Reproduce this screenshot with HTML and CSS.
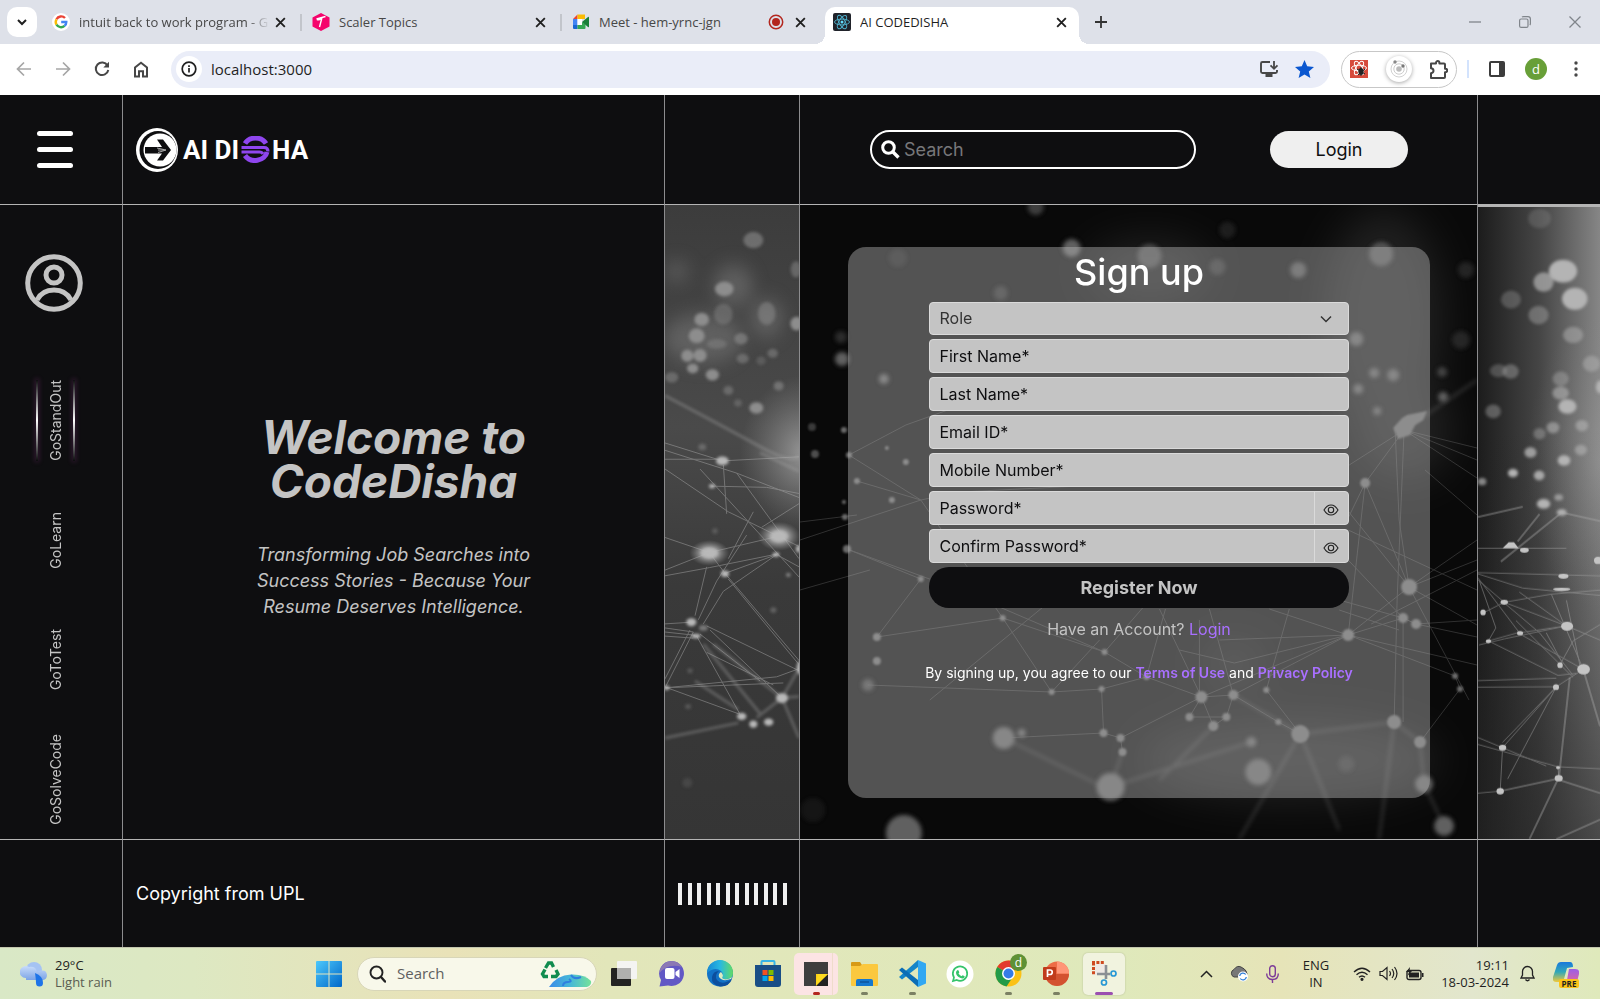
FILE: index.html
```html
<!DOCTYPE html>
<html lang="en">
<head>
<meta charset="utf-8">
<meta name="viewport" content="width=device-width, initial-scale=1">
<title>AI CODEDISHA</title>
<link rel="stylesheet" href="styles.css">
</head>
<body>
<svg class="defs" aria-hidden="true">
  <defs>
    <symbol id="x" viewBox="0 0 12 12"><path d="M2 2l8 8M10 2l-8 8" stroke="currentColor" stroke-width="1.7" fill="none"/></symbol>
    <symbol id="eye" viewBox="0 0 16 12"><path d="M1 6C3 2.600 5.300 1 8 1s5 1.600 7 5c-2 3.400-4.300 5-7 5S3 9.400 1 6z" fill="none" stroke="#222" stroke-width="1.100"/><circle cx="8" cy="6" r="2.700" fill="none" stroke="#222" stroke-width="1.100"/></symbol>
  </defs>
</svg>

<div class="tabstrip">
  <button class="tab-menu" aria-label="Search tabs"><svg width="12" height="12" viewBox="0 0 12 12"><path d="M2 4l4 4 4-4" fill="none" stroke="#1f1f1f" stroke-width="2"/></svg></button>
  <div class="tab">
    <svg width="18" height="18" viewBox="0 0 18 18"><circle cx="9" cy="9" r="9" fill="#fff"/><g fill="none" stroke-width="2.400"><path d="M13 5A5.300 5.300 0 0 0 4.500 6.300" stroke="#ea4335"/><path d="M4.500 6.300a5.300 5.300 0 0 0 0 5.400" stroke="#fbbc05"/><path d="M4.500 11.700a5.300 5.300 0 0 0 8 1.200" stroke="#34a853"/><path d="M12.500 12.900A5 5 0 0 0 14.300 9H9.200" stroke="#4285f4"/></g></svg>
    <span class="tab-title fade">intuit back to work program - G</span>
    <button class="tab-close" aria-label="Close tab"><svg width="13" height="13"><use href="#x"/></svg></button>
  </div>
  <div class="tab">
    <svg width="18" height="18" viewBox="0 0 18 18"><path d="M9 0l8.500 4.500v9L9 18 .5 13.500v-9z" fill="#f5046c"/><path d="M4.500 6l9-2.500M10 4.500L7.500 14M5 6.500q2 1 4-1" stroke="#fff" stroke-width="1.400" fill="none"/></svg>
    <span class="tab-title">Scaler Topics</span>
    <button class="tab-close" aria-label="Close tab"><svg width="13" height="13"><use href="#x"/></svg></button>
  </div>
  <div class="tab last">
    <svg width="18" height="18" viewBox="0 0 18 18"><path d="M1 6l4.500-4.500V6z" fill="#ea4335"/><path d="M5.500 1.500H13V6H5.500z" fill="#fbbc04"/><path d="M1 6h4.500v6H1z" fill="#4285f4"/><path d="M1 12h4.500v4H2q-1 0-1-1z" fill="#1967d2"/><path d="M5.500 12H10V9l3.500 2.500V15q0 1-1 1h-7z" fill="#34a853"/><path d="M5.500 6H10v6H5.500z" fill="#fff"/><path d="M10 9l6-5q1-.6 1 .5v9q0 1-1 .4z" fill="#188038"/></svg>
    <span class="tab-title">Meet - hem-yrnc-jgn</span>
    <svg width="16" height="16" viewBox="0 0 16 16"><circle cx="8" cy="8" r="6.700" fill="none" stroke="#b3261e" stroke-width="1.500"/><circle cx="8" cy="8" r="4" fill="#b3261e"/></svg>
    <button class="tab-close" aria-label="Close tab"><svg width="13" height="13"><use href="#x"/></svg></button>
  </div>
  <div class="tab active">
    <svg width="18" height="18" viewBox="0 0 18 18"><rect width="18" height="18" rx="2" fill="#20232a"/><g fill="none" stroke="#4fb3cf" stroke-width=".9"><ellipse cx="9" cy="9" rx="7.500" ry="2.900"/><ellipse cx="9" cy="9" rx="7.500" ry="2.900" transform="rotate(60 9 9)"/><ellipse cx="9" cy="9" rx="7.500" ry="2.900" transform="rotate(120 9 9)"/></g><circle cx="9" cy="9" r="1.500" fill="#61dafb"/></svg>
    <span class="tab-title">AI CODEDISHA</span>
    <button class="tab-close" aria-label="Close tab"><svg width="13" height="13"><use href="#x"/></svg></button>
  </div>
  <button class="new-tab" aria-label="New tab"><svg width="14" height="14" viewBox="0 0 14 14"><path d="M7 1v12M1 7h12" stroke="#333" stroke-width="1.800"/></svg></button>
  <div class="win-controls">
    <button aria-label="Minimize"><svg width="12" height="12" viewBox="0 0 12 12"><path d="M0 6h12" stroke="#80858b" stroke-width="1.300"/></svg></button>
    <button aria-label="Restore"><svg width="12" height="12" viewBox="0 0 12 12" fill="none" stroke="#80858b" stroke-width="1.200"><rect x=".6" y="3" width="8.400" height="8.400" rx="1.500"/><path d="M3 1q.5-.4 1.500-.4h4.500q2.400 0 2.400 2.400v4.500q0 1-.6 1.500"/></svg></button>
    <button aria-label="Close"><svg width="12" height="12" viewBox="0 0 12 12"><path d="M.5.5l11 11M11.500.5l-11 11" stroke="#80858b" stroke-width="1.300"/></svg></button>
  </div>
</div>

<div class="toolbar">
  <div class="nav-buttons">
    <button aria-label="Back"><svg width="16" height="16" viewBox="0 0 16 16"><path d="M15 8H2M8 1.500L1.500 8 8 14.500" fill="none" stroke="#a6a6a6" stroke-width="1.700"/></svg></button>
    <button aria-label="Forward"><svg width="16" height="16" viewBox="0 0 16 16"><path d="M1 8h13M8 1.500L14.500 8 8 14.500" fill="none" stroke="#a6a6a6" stroke-width="1.700"/></svg></button>
    <button aria-label="Reload"><svg width="16" height="16" viewBox="0 0 16 16"><path d="M13.500 4.500A6.300 6.300 0 1 0 14.300 9" fill="none" stroke="#474747" stroke-width="2"/><path d="M15 .8v5.700H9.300z" fill="#474747"/></svg></button>
    <button aria-label="Home"><svg width="16" height="17" viewBox="0 0 16 17"><path d="M2 15.500V6.500L8 1.800l6 4.700v9h-4v-5.300H6v5.300z" fill="none" stroke="#474747" stroke-width="2"/></svg></button>
  </div>
  <div class="omnibox">
    <button class="site-info" aria-label="Site information"><svg width="16" height="16" viewBox="0 0 16 16"><circle cx="8" cy="8" r="6.800" fill="none" stroke="#1f1f1f" stroke-width="1.700"/><path d="M8 7v4.500M8 4.300v1.700" stroke="#1f1f1f" stroke-width="1.700"/></svg></button>
    <input class="url" type="text" value="localhost:3000" aria-label="Address">
    <button aria-label="Install app"><svg width="20" height="18" viewBox="0 0 20 18"><path d="M11 2H3.500Q2 2 2 3.500v8Q2 13 3.500 13h13q1.500 0 1.500-1.500V10" fill="none" stroke="#474747" stroke-width="1.900"/><path d="M6.500 14h7v3h-7z" fill="#474747"/><path d="M15 1v7M11.500 5.300L15 8.800l3.500-3.500" fill="none" stroke="#474747" stroke-width="1.800"/></svg></button>
    <button aria-label="Bookmark"><svg width="19" height="18" viewBox="0 0 19 18"><path d="M9.500 0l2.700 6.300 6.800.6-5.200 4.500 1.600 6.600-5.900-3.500L3.600 18l1.600-6.600L0 6.900l6.800-.6z" fill="#0b57d0"/></svg></button>
  </div>
  <div class="extensions">
    <button aria-label="React tools"><svg width="18" height="18" viewBox="0 0 18 18"><rect width="18" height="18" fill="#d64a3b"/><g fill="none" stroke="#fff" stroke-width="1"><ellipse cx="9" cy="8" rx="7.500" ry="2.800"/><ellipse cx="9" cy="8" rx="7.500" ry="2.800" transform="rotate(60 9 8)"/><ellipse cx="9" cy="8" rx="7.500" ry="2.800" transform="rotate(120 9 8)"/></g><ellipse cx="11" cy="11.500" rx="2.600" ry="3.500" fill="#222"/><path d="M7 9l8 5M15 9l-7 6M11 7v9" stroke="#222"/></svg></button>
    <button class="orbit" aria-label="Orbit"><svg width="26" height="26" viewBox="0 0 26 26"><circle cx="13" cy="13" r="2.800" fill="#bbb"/><circle cx="13" cy="13" r="5.200" fill="none" stroke="#ccc"/><circle cx="13" cy="13" r="8" fill="none" stroke="#d2d2d2"/><circle cx="9" cy="6" r="1.700" fill="#888"/><circle cx="17" cy="10" r="1.700" fill="#777"/></svg></button>
    <button aria-label="Extensions"><svg width="19" height="19" viewBox="0 0 19 19"><path d="M2 3.500h5V2.800a1.700 1.700 0 0 1 3.400 0v.7h4.600q1 0 1 1v4.300h.5a1.700 1.700 0 0 1 0 3.400H16V17q0 1-1 1H2v-4.800q2.500-.4 2.500-2.500T2 8.300z" fill="none" stroke="#474747" stroke-width="2" stroke-linejoin="round"/></svg></button>
  </div>
  <span class="divider"></span>
  <button aria-label="Side panel"><svg width="16" height="16" viewBox="0 0 16 16"><rect x="1" y="1" width="14" height="14" rx="1" fill="none" stroke="#3c3c3c" stroke-width="2"/><path d="M10 1h5v14h-5z" fill="#3c3c3c"/></svg></button>
  <button class="avatar" aria-label="Profile">d</button>
  <button aria-label="Menu"><svg width="4" height="16" viewBox="0 0 4 16" fill="#474747"><circle cx="2" cy="2" r="1.700"/><circle cx="2" cy="8" r="1.700"/><circle cx="2" cy="14" r="1.700"/></svg></button>
</div>

<div class="site">
  <header class="cell burger-cell"><button class="burger" aria-label="Menu"><span></span><span></span><span></span></button></header>
  <div class="cell logo-cell">
    <a class="logo" href="#" aria-label="AI Disha">
      <svg width="42" height="44" viewBox="0 0 42 44"><ellipse cx="21" cy="22" rx="21" ry="22" fill="#fff"/><ellipse cx="22" cy="22" rx="18.500" ry="19" fill="#0e0e10"/><ellipse cx="24" cy="22" rx="16.500" ry="16.500" fill="#fff"/><path d="M9 19h17l-5-7.500h6L35 22l-8 10.500h-6l5-7H9z" fill="#0e0e10"/><path d="M21 20l9 2-8 2.500M22 22h6" stroke="#bbb" fill="none" stroke-width=".9"/></svg>
      <span>AI DI</span>
      <svg class="logo-s" width="29" height="27" viewBox="0 0 29 27" fill="none" stroke="#8f46ee"><path d="M25 7.500A12 10.500 0 0 0 4 7.500" stroke-width="5"/><path d="M.5 11.500H23q4 0 4 4" stroke-width="3.200"/><path d="M.5 16h18q2.500 0 3.500 2" stroke-width="3"/><path d="M4 19.500A12 10.500 0 0 0 26 16" stroke-width="5"/></svg>
      <span>HA</span>
    </a>
  </div>
  <div class="cell"></div>
  <div class="cell tools-cell">
    <label class="search">
      <svg width="19" height="19" viewBox="0 0 19 19"><circle cx="7.500" cy="7.500" r="5.800" fill="none" stroke="#fff" stroke-width="3"/><path d="M12 12l5.500 5.500" stroke="#fff" stroke-width="3.400"/></svg>
      <input type="search" placeholder="Search" aria-label="Search">
    </label>
    <button class="login">Login</button>
  </div>
  <div class="cell end"></div>

  <nav class="cell side">
    <a class="profile" href="#" aria-label="Profile"><svg width="58" height="58" viewBox="0 0 58 58" fill="none" stroke="#c4c4c4" stroke-width="5"><circle cx="29" cy="29" r="26.300"/><circle cx="29" cy="21" r="8"/><path d="M12 46q5-10 17-10t17 10"/></svg></a>
    <div class="side-item"><a class="current" href="#">GoStandOut</a></div>
    <div class="side-item"><a href="#">GoLearn</a></div>
    <div class="side-item"><a href="#">GoToTest</a></div>
    <div class="side-item"><a href="#">GoSolveCode</a></div>
  </nav>
  <section class="cell welcome">
    <h1>Welcome to<br>CodeDisha</h1>
    <p>Transforming Job Searches into<br>Success Stories - Because Your<br>Resume Deserves Intelligence.</p>
  </section>
  <div class="cell art">
    <svg class="scene" viewBox="15 12 402 1556" preserveAspectRatio="none" aria-hidden="true">
      <defs>
        <linearGradient id="ga" x2="0" y2="1"><stop offset="0" stop-color="#3c3c3c"/><stop offset=".35" stop-color="#4a4a4a"/><stop offset=".6" stop-color="#3a3a3a"/><stop offset="1" stop-color="#353535"/></linearGradient>
        <radialGradient id="glow"><stop offset="0" stop-color="#aaa" stop-opacity=".8"/><stop offset="1" stop-color="#888" stop-opacity="0"/></radialGradient>
        <radialGradient id="node"><stop offset="0" stop-color="#d4d4d4"/><stop offset=".4" stop-color="#bbb" stop-opacity=".8"/><stop offset="1" stop-color="#888" stop-opacity="0"/></radialGradient>
        <filter id="b1" x="-50%" y="-50%" width="200%" height="200%"><feGaussianBlur stdDeviation="4"/></filter>
        <filter id="b2" x="-50%" y="-50%" width="200%" height="200%"><feGaussianBlur stdDeviation="24"/></filter>
      </defs>
      <rect x="15" y="12" width="402" height="1556" fill="url(#ga)"/>
      <ellipse cx="430" cy="620" rx="190" ry="190" fill="url(#glow)"/>
      <g fill="#777" filter="url(#b2)" opacity=".55"><ellipse cx="130" cy="340" rx="120" ry="60"/><ellipse cx="320" cy="290" rx="50" ry="45"/><ellipse cx="50" cy="175" rx="40" ry="20"/><ellipse cx="220" cy="210" rx="60" ry="50"/></g>
      <g fill="#8d8d8d" filter="url(#b1)">
        <ellipse cx="280" cy="98" rx="30" ry="20" opacity=".6"/><ellipse cx="193" cy="218" rx="28" ry="18"/><ellipse cx="125" cy="293" rx="22" ry="16"/><ellipse cx="110" cy="333" rx="24" ry="18"/><ellipse cx="82" cy="382" rx="18" ry="15"/><ellipse cx="120" cy="381" rx="20" ry="16"/><ellipse cx="98" cy="413" rx="17" ry="12"/><ellipse cx="157" cy="429" rx="20" ry="14"/><ellipse cx="190" cy="280" rx="28" ry="26" opacity=".4"/><ellipse cx="170" cy="353" rx="30" ry="12" opacity=".4"/><ellipse cx="320" cy="278" rx="26" ry="28" opacity=".5"/><ellipse cx="243" cy="340" rx="20" ry="14" opacity=".6"/><ellipse cx="248" cy="389" rx="18" ry="12" opacity=".5"/><ellipse cx="338" cy="376" rx="16" ry="11" opacity=".5"/><ellipse cx="303" cy="394" rx="14" ry="11" opacity=".3"/><ellipse cx="205" cy="467" rx="15" ry="11" opacity=".5"/><ellipse cx="356" cy="456" rx="15" ry="11" opacity=".6"/><ellipse cx="289" cy="510" rx="21" ry="14"/><ellipse cx="234" cy="498" rx="12" ry="9" opacity=".4"/><ellipse cx="410" cy="303" rx="19" ry="17"/><ellipse cx="408" cy="170" rx="16" ry="20" opacity=".5"/><ellipse cx="35" cy="435" rx="20" ry="13" opacity=".5"/><ellipse cx="127" cy="606" rx="12" ry="8" opacity=".5"/><ellipse cx="165" cy="812" rx="8" ry="7" opacity=".4"/><ellipse cx="340" cy="1006" rx="9" ry="7" opacity=".5"/><ellipse cx="385" cy="920" rx="7" ry="5"/><ellipse cx="90" cy="1155" rx="8" ry="6" opacity=".4"/><ellipse cx="84" cy="1243" rx="9" ry="6" opacity=".4"/><ellipse cx="82" cy="1430" rx="15" ry="12" opacity=".2"/>
      </g>
      <g class="thick" filter="url(#b1)" opacity=".35"><path d="M15 480Q200 560 300 605T417 628M300 620L417 665M160 1090L366 1222L417 1218M290 1270L366 1222L417 1150M366 1222L417 1320M105 1180L235 1250M130 1090L300 1260M15 1320L235 1283"/></g>
      <g class="thin">
        <path d="M15 596L187 640L417 630M15 636H187M15 614L230 670L417 730M15 660L205 765L355 825M120 660L417 925M190 650L200 770M230 670L417 880M155 702L320 705L417 720M305 803L417 745M15 828L148 865L15 908M15 922L148 902L355 868M148 865L355 825L417 850M148 865L195 916L417 1130M205 930L417 1140M195 916L350 870L417 900M350 870L190 960L130 1040M260 822L170 935L115 1030M140 900L105 1020M280 765L205 880M15 1040L95 1036M15 1050L100 1060M15 1060L105 1068M15 1070L100 1075M140 1045L417 1155M150 1055L366 1222M110 1070L240 1262M120 1065L300 1180M100 1060L15 1197M90 1055L15 1175M15 1197L350 1170L417 1150M15 1197L370 1185M15 1195L240 1262M140 1110L340 1190"/>
      </g>
      <g fill="url(#node)"><ellipse cx="148" cy="866" rx="60" ry="32"/><ellipse cx="357" cy="825" rx="64" ry="36"/></g>
      <g fill="#b9b9b9" filter="url(#b1)"><ellipse cx="187" cy="640" rx="19" ry="11"/><ellipse cx="148" cy="866" rx="24" ry="10"/><ellipse cx="357" cy="825" rx="24" ry="11"/><ellipse cx="195" cy="917" rx="12" ry="8"/><ellipse cx="348" cy="870" rx="10" ry="6"/><ellipse cx="94" cy="1036" rx="15" ry="10"/><ellipse cx="108" cy="1070" rx="14" ry="6"/><ellipse cx="130" cy="1050" rx="13" ry="7" opacity=".5"/><ellipse cx="366" cy="1222" rx="18" ry="12"/><ellipse cx="245" cy="1267" rx="14" ry="9"/><ellipse cx="280" cy="1286" rx="12" ry="9"/><ellipse cx="326" cy="1281" rx="14" ry="9"/><ellipse cx="156" cy="702" rx="9" ry="5"/><ellipse cx="415" cy="856" rx="7" ry="9"/><ellipse cx="420" cy="1148" rx="10" ry="16"/><ellipse cx="20" cy="1197" rx="8" ry="6"/></g>
    </svg>
  </div>
  <main class="cell form-cell">
    <svg class="scene" viewBox="800 205 678 634" preserveAspectRatio="none" aria-hidden="true">
      <defs>
        <filter id="c1" x="-50%" y="-50%" width="200%" height="200%"><feGaussianBlur stdDeviation="1"/></filter>
        <filter id="c3" x="-50%" y="-50%" width="200%" height="200%"><feGaussianBlur stdDeviation="2"/></filter>
        <filter id="c2" x="-50%" y="-50%" width="200%" height="200%"><feGaussianBlur stdDeviation="22"/></filter>
      </defs>
      <rect x="800" y="205" width="678" height="634" fill="#090909"/>
      <g fill="#777" filter="url(#c2)" opacity=".22"><ellipse cx="1385" cy="320" rx="60" ry="110"/><ellipse cx="1150" cy="270" rx="60" ry="30"/><ellipse cx="1405" cy="430" rx="50" ry="50"/><ellipse cx="1290" cy="760" rx="150" ry="40"/><ellipse cx="1235" cy="663" rx="30" ry="20"/></g>
      <g class="thick" opacity=".2" filter="url(#c3)"><path d="M1301 734L1395 722L1421 742L1425 784L1445 826M1301 734L1234 695M1111 787L1252 742M1123 752L1111 787M1301 734L1340 830M1301 734L1240 839M1395 722L1380 839M1214 726L1160 780M1405 430L1478 380M1004 738L1110 790"/></g>
      <g class="faint">
        <path d="M849 455L921 500L1003 618M849 455L906 425L990 395M857 481L921 500L960 492L1080 486M800 540L921 500M847 549L921 579L877 637M847 549L960 590L1105 652L1147 677L1202 697L1234 695M877 637L1003 618L1105 652M1003 618L1052 692L1102 689L1147 677M868 685L1052 692M1102 689L1104 733L1121 738L1202 697M1004 738L1104 733M1052 692L1100 640M1121 738L1123 752M1202 697L1190 717M1202 697L1214 726L1227 717L1234 695L1279 722L1301 734M1267 690L1301 734M1190 717L1227 717M1105 652L1150 600M1147 677L1166 609M1202 697L1160 609M1202 697L1349 635M1234 695L1349 635M1267 690L1290 609M1349 635L1410 587L1478 540M1349 635L1404 618L1417 624L1478 637M1349 635L1456 676L1461 689L1421 742M1349 635L1478 665M1349 635L1366 483M1366 483L1405 430L1478 478M1366 483L1348 520M1405 430L1398 600M1398 600L1395 722M1404 620L1404 722M1405 430L1350 465M1405 430L1478 460M1405 430L1478 448M1366 483L1410 587M1396 430L1400 520L1410 587L1470 700M1340 500L1410 587M1330 540L1404 618M1372 624L1478 570M1340 600L1404 618M1340 610L1400 630M1410 587L1478 560M1417 624L1478 620M1410 587L1478 625M1426 470L1478 515M1349 530L1478 590M930 700L1052 600M800 590L870 570M800 522L857 515M1200 697L1200 620M1234 695L1210 609M1349 635L1270 609M1349 635L1235 663L1180 650M1349 635L1220 640"/>
      </g>
      <g fill="#606060" filter="url(#c3)">
        <circle cx="1036" cy="207" r="8" opacity=".6"/><circle cx="1072" cy="248" r="9"/><circle cx="1150" cy="256" r="12" opacity=".7"/><circle cx="1218" cy="267" r="8" opacity=".4"/><circle cx="1299" cy="270" r="8" opacity=".8"/><circle cx="1382" cy="254" r="12" opacity=".8"/><circle cx="1228" cy="230" r="8" opacity=".25"/><circle cx="898" cy="258" r="9" opacity=".2"/><circle cx="1001" cy="293" r="7" opacity=".4"/><circle cx="842" cy="359" r="7"/><circle cx="884" cy="379" r="5"/><circle cx="841" cy="337" r="6" opacity=".4"/><circle cx="1357" cy="339" r="7"/><circle cx="1394" cy="375" r="6"/><circle cx="1375" cy="373" r="5"/><circle cx="1359" cy="389" r="5"/><circle cx="1378" cy="411" r="4"/><circle cx="1444" cy="397" r="5"/><circle cx="1443" cy="372" r="5" opacity=".6"/><circle cx="1467" cy="270" r="8" opacity=".3"/><circle cx="1462" cy="340" r="9" opacity=".3"/><circle cx="868" cy="685" r="6" opacity=".7"/><circle cx="1022" cy="733" r="4"/><circle cx="1252" cy="742" r="5"/><circle cx="1004" cy="738" r="11"/><circle cx="1111" cy="787" r="14"/><circle cx="1259" cy="772" r="13"/><circle cx="904" cy="833" r="18"/><circle cx="1445" cy="826" r="10"/><circle cx="1425" cy="784" r="9"/><circle cx="813" cy="810" r="12" opacity=".15"/><circle cx="1347" cy="764" r="8" opacity=".3"/>
      </g>
      <g fill="#6b6b6b" filter="url(#c1)">
        <circle cx="849" cy="455" r="3"/><circle cx="844" cy="430" r="3"/><circle cx="887" cy="448" r="2"/><circle cx="857" cy="481" r="3"/><circle cx="906" cy="462" r="3"/><circle cx="892" cy="500" r="3"/><circle cx="844" cy="502" r="2"/><circle cx="815" cy="454" r="4" opacity=".7"/><circle cx="812" cy="427" r="4" opacity=".5"/><circle cx="877" cy="661" r="4"/><circle cx="1123" cy="752" r="4"/>
        <path d="M1394 428l9-10 5-3 20-4-4 9-8 5-5 10-12 4z"/><circle cx="1366" cy="483" r="5"/><circle cx="847" cy="549" r="4"/><circle cx="921" cy="579" r="3"/><circle cx="845" cy="517" r="3"/><circle cx="877" cy="637" r="4"/><circle cx="1003" cy="618" r="3"/><circle cx="1105" cy="652" r="3"/><circle cx="1104" cy="733" r="4"/><circle cx="1121" cy="738" r="4"/><circle cx="1052" cy="692" r="3"/><circle cx="1102" cy="689" r="3"/><circle cx="1147" cy="677" r="3"/><circle cx="1202" cy="697" r="6"/><circle cx="1234" cy="695" r="5"/><circle cx="1267" cy="690" r="3"/><circle cx="1190" cy="717" r="4"/><circle cx="1227" cy="717" r="4"/><circle cx="1214" cy="726" r="5"/><circle cx="1279" cy="722" r="3"/><circle cx="1301" cy="734" r="9"/><circle cx="1395" cy="722" r="7"/><circle cx="1421" cy="742" r="6"/><circle cx="1349" cy="635" r="6"/><circle cx="1410" cy="587" r="8"/><circle cx="1404" cy="618" r="5"/><circle cx="1417" cy="624" r="5"/><circle cx="1456" cy="676" r="3"/><circle cx="1461" cy="689" r="3"/>
      </g>
    </svg>
    <form class="card">
      <h2>Sign up</h2>
      <select class="field" aria-label="Role"><option>Role</option><option>Student</option><option>Recruiter</option></select>
      <input class="field" type="text" placeholder="First Name*" aria-label="First Name">
      <input class="field" type="text" placeholder="Last Name*" aria-label="Last Name">
      <input class="field" type="email" placeholder="Email ID*" aria-label="Email ID">
      <input class="field" type="tel" placeholder="Mobile Number*" aria-label="Mobile Number">
      <div class="field secret"><input type="password" placeholder="Password*" aria-label="Password"><button type="button" aria-label="Show password"><svg width="16" height="12"><use href="#eye"/></svg></button></div>
      <div class="field secret"><input type="password" placeholder="Confirm Password*" aria-label="Confirm Password"><button type="button" aria-label="Show password"><svg width="16" height="12"><use href="#eye"/></svg></button></div>
      <button class="register" type="button">Register Now</button>
      <p class="have">Have an Account? <a href="#">Login</a></p>
      <p class="terms">By signing up, you agree to our <a href="#">Terms of Use</a> and <a href="#">Privacy Policy</a></p>
    </form>
  </main>
  <div class="cell art end edge">
    <svg class="scene" viewBox="117 12 363 1556" preserveAspectRatio="none" aria-hidden="true">
      <defs>
        <linearGradient id="gb"><stop offset="0" stop-color="#1c1c1c"/><stop offset=".5" stop-color="#454545"/><stop offset="1" stop-color="#868686"/></linearGradient>
        <linearGradient id="gc" x2="0" y2="1"><stop offset=".35" stop-color="#222" stop-opacity="0"/><stop offset="1" stop-color="#222" stop-opacity=".6"/></linearGradient>
      </defs>
      <rect x="117" y="12" width="363" height="1556" fill="url(#gb)"/>
      <rect x="117" y="12" width="363" height="1556" fill="url(#gc)"/>
      <ellipse cx="480" cy="640" rx="220" ry="360" fill="url(#glow)" opacity=".4"/>
      <g fill="#b4b4b4" filter="url(#b1)">
        <ellipse cx="370" cy="170" rx="42" ry="28"/><ellipse cx="312" cy="197" rx="30" ry="24" opacity=".7"/><ellipse cx="405" cy="238" rx="38" ry="27"/><ellipse cx="300" cy="40" rx="34" ry="24" opacity=".2"/><ellipse cx="215" cy="240" rx="30" ry="22" opacity=".3"/><ellipse cx="297" cy="278" rx="30" ry="23" opacity=".4"/><ellipse cx="400" cy="327" rx="30" ry="20" opacity=".5"/><ellipse cx="455" cy="398" rx="26" ry="20" opacity=".5"/><ellipse cx="178" cy="415" rx="26" ry="16" opacity=".3"/><ellipse cx="214" cy="417" rx="24" ry="18" opacity=".4"/><ellipse cx="363" cy="435" rx="24" ry="18" opacity=".4"/><ellipse cx="363" cy="470" rx="25" ry="16" opacity=".6"/><ellipse cx="383" cy="503" rx="27" ry="18"/><ellipse cx="162" cy="515" rx="23" ry="17" opacity=".4"/><ellipse cx="340" cy="555" rx="19" ry="14" opacity=".6"/><ellipse cx="300" cy="570" rx="18" ry="14" opacity=".4"/><ellipse cx="426" cy="550" rx="19" ry="14" opacity=".6"/><ellipse cx="273" cy="616" rx="18" ry="13" opacity=".8"/><ellipse cx="423" cy="610" rx="18" ry="13" opacity=".6"/><ellipse cx="373" cy="636" rx="19" ry="13"/><ellipse cx="221" cy="667" rx="15" ry="10"/><ellipse cx="299" cy="673" rx="16" ry="12" opacity=".9"/><ellipse cx="129" cy="688" rx="13" ry="9" opacity=".7"/><ellipse cx="357" cy="727" rx="13" ry="8" opacity=".7"/><ellipse cx="312" cy="743" rx="20" ry="12"/><ellipse cx="366" cy="764" rx="15" ry="8"/><ellipse cx="480" cy="455" rx="12" ry="16"/>
      </g>
      <g class="thick soft" opacity=".4"><path d="M117 775L250 750M300 768L235 835M366 764L185 885M366 764L480 785M430 1150L480 1290M390 1170L358 1415L270 1568M183 1450L350 1420L480 1455M350 1568L480 1520"/></g>
      <g class="thin">
        <path d="M117 852H380M117 912L480 920M117 915L250 950L480 968M117 930L195 985L335 965L480 955M135 1010L195 985L380 1043M117 925L240 1060L380 1043M148 1080L235 1060L430 1150M148 1080L355 1165L410 1160M120 930L170 1048L148 1080M200 990L300 1060L400 1165M240 960L380 1043L480 1078M335 965L430 1150M380 980L420 1140M117 1178L350 1172M117 1194L350 1193M430 1150L350 1193L190 1343L183 1450M350 1193L205 1420M350 1193L190 1330M117 1318L190 1343L320 1388M117 1335L355 1390L480 1395M355 1390L357 1418M117 1455L183 1450M480 1040L400 1080L360 1140M120 1090L195 1075L380 1043M320 1060L365 1130M230 1030L400 1170"/>
      </g>
      <g fill="#c4c4c4"><path d="M190 852l18-15h16l14 15z"/><ellipse cx="255" cy="857" rx="13" ry="6"/><ellipse cx="382" cy="1044" rx="18" ry="11"/><ellipse cx="431" cy="1150" rx="19" ry="13"/><ellipse cx="371" cy="921" rx="15" ry="6"/><ellipse cx="366" cy="953" rx="26" ry="4"/><ellipse cx="195" cy="985" rx="11" ry="6"/><ellipse cx="132" cy="1010" rx="8" ry="7"/><ellipse cx="148" cy="1081" rx="8" ry="5"/><ellipse cx="242" cy="1061" rx="9" ry="5"/><ellipse cx="361" cy="1140" rx="8" ry="7"/><ellipse cx="349" cy="1194" rx="9" ry="7"/><ellipse cx="190" cy="1343" rx="11" ry="7"/><ellipse cx="183" cy="1450" rx="11" ry="8"/><ellipse cx="357" cy="1418" rx="12" ry="8"/><ellipse cx="355" cy="1392" rx="6" ry="4"/><ellipse cx="474" cy="882" rx="12" ry="9"/></g>
    </svg>
  </div>

  <div class="cell foot"></div>
  <footer class="cell foot copyright">Copyright from UPL</footer>
  <div class="cell foot bars"><i></i><i></i><i></i><i></i><i></i><i></i><i></i><i></i><i></i><i></i><i></i><i></i></div>
  <div class="cell foot"></div>
  <div class="cell foot end"></div>
</div>

<div class="taskbar">
  <button class="weather">
    <svg width="28" height="26" viewBox="0 0 28 26"><defs><linearGradient id="cl" x2="0" y2="1"><stop offset="0" stop-color="#c8dcfa"/><stop offset="1" stop-color="#7ba3e6"/></linearGradient></defs><circle cx="14" cy="9" r="8" fill="#a5c3f3"/><path d="M6 17a6 6 0 1 1 3-11q7-1 8 5 9-4 10 3 0 5-5 5H6z" fill="url(#cl)"/><path d="M15 12q8 3 8 10a3.500 3.500 0 0 1-7 0q0-3-1-10z" fill="#1e74e8"/></svg>
    <span><b>29°C</b><br>Light rain</span>
  </button>
  <div class="apps">
    <button class="app start" aria-label="Start"><svg width="26" height="26" viewBox="0 0 26 26"><defs><linearGradient id="wn" x2="1" y2="1"><stop offset="0" stop-color="#4cc8fb"/><stop offset="1" stop-color="#0067c9"/></linearGradient></defs><path d="M0 1q0-1 1-1h11.500v12.500H0zM13.500 0H25q1 0 1 1v11.500H13.500zM0 13.500h12.500V26H1q-1 0-1-1zM13.500 13.500H26V25q0 1-1 1H13.500z" fill="url(#wn)"/></svg></button>
    <label class="task-search">
      <svg width="17" height="18" viewBox="0 0 17 18"><circle cx="7.500" cy="7.500" r="6" fill="none" stroke="#222" stroke-width="1.900"/><path d="M12 12l4 4.500" stroke="#222" stroke-width="2.400" stroke-linecap="round"/></svg>
      <input type="search" placeholder="Search" aria-label="Search Windows">
      <svg width="52" height="28" viewBox="0 0 52 28"><defs><linearGradient id="pl"><stop offset="0" stop-color="#3b8ce8"/><stop offset=".5" stop-color="#47b8d8"/><stop offset="1" stop-color="#75e29a"/></linearGradient></defs><path d="M9 27Q17 15 31 14.500T51 21q1 4-4 6z" fill="url(#pl)"/><path d="M23 26q0-4 5-4t1-3M31 15q3 5 10 2" fill="none" stroke="#2f80df" stroke-width="2"/><g fill="none" stroke="#118c4f" stroke-width="3.400"><path d="M5.500 8L8.500 3h3l2 4"/><path d="M16 10l2 4-2 2.500h-5"/><path d="M8 16.500H4L2.500 14 5 9.500"/></g></svg>
    </label>
    <button class="app" aria-label="Task view"><svg width="26" height="26" viewBox="0 0 26 26"><rect y="7" width="20" height="18" rx="1" fill="#232321"/><rect x="6" y="0" width="20" height="18" rx="1" fill="#f4f4f4" opacity=".95"/><path d="M6 7h14v11H6z" fill="#b0b0ae"/></svg></button>
    <button class="app" aria-label="Chat"><svg width="26" height="27" viewBox="0 0 26 27"><path d="M13 1a12.500 12.500 0 1 1-4 24.500L.5 26.500 2 20A12.500 12.500 0 0 1 13 1z" fill="#6258c5"/><path d="M13 1A12.500 12.500 0 0 0 .5 13Q9 3 23 7 19 1 13 1z" fill="#8b78b4"/><rect x="6" y="8" width="9.500" height="11" rx="2" fill="#fff"/><path d="M16.500 12l4-3v9l-4-3z" fill="#fff"/></svg></button>
    <button class="app" aria-label="Edge"><svg width="26" height="27" viewBox="0 0 26 27"><defs><linearGradient id="ed"><stop offset="0" stop-color="#1688d4"/><stop offset=".5" stop-color="#28b8e2"/><stop offset="1" stop-color="#62db64"/></linearGradient></defs><circle cx="13" cy="13.500" r="13" fill="#1272c6"/><path d="M0 13A13 13 0 0 1 26 13q0 6-7 6-4 0-4-2 2-3-1-6Q8 6 0 13z" fill="url(#ed)"/><path d="M12 11q-5 4-2 9 5 6 15-1-3 8-12 7.500Q4 25 5 17q1-6 7-6z" fill="#0c4f9e"/><path d="M14 12q-3 2-2 5 3 5 12 2l1-2q-4 3-8 2-3-1-1-3 0-2-2-4z" fill="#dcecc1"/></svg></button>
    <button class="app" aria-label="Store"><svg width="26" height="27" viewBox="0 0 26 27"><path d="M6.500 6V2q0-1 1-1h11q1 0 1 1v4" fill="none" stroke="#35b4e8" stroke-width="2"/><path d="M0 5h26v19q0 3-3 3H3q-3 0-3-3z" fill="#194e86"/><path d="M7.500 10h5v5h-5z" fill="#f25022"/><path d="M13.500 10h5v5h-5z" fill="#7fba00"/><path d="M7.500 16h5v5h-5z" fill="#00a4ef"/><path d="M13.500 16h5v5h-5z" fill="#ffb900"/></svg></button>
    <button class="app notes" aria-label="Sticky Notes"><svg width="24" height="24" viewBox="0 0 24 24"><path d="M0 0h24v24H0z" fill="#3e3e3e"/><path d="M12 12h12v1L13 24h-1z" fill="#fcd116"/><path d="M24 12L12 24h12z" fill="#222"/><path d="M14 12h10L12 23z" fill="#ffda1f"/></svg></button>
    <button class="app open" aria-label="Explorer"><svg width="27" height="25" viewBox="0 0 27 25"><path d="M0 2q0-1 1-1h8l2 3v4H0z" fill="#d79a17"/><path d="M0 5h9l3-2h14q1 0 1 1v20q0 1-1 1H1q-1 0-1-1z" fill="#fbc83f"/><path d="M5 25v-5q0-2 2-2h13q2 0 2 2v5z" fill="#1577cf"/><path d="M9 21h9" stroke="#0c4e96" stroke-width="1.300"/></svg></button>
    <button class="app open" aria-label="VS Code"><svg width="27" height="27" viewBox="0 0 27 27"><path d="M19 0l8 3.500v20L19 27z" fill="#31a8f2"/><path d="M19 0v7L3 19.500 0 17z" fill="#1585c8"/><path d="M19 27v-7L3 7.500 0 10z" fill="#0b6eb6"/></svg></button>
    <button class="app" aria-label="WhatsApp"><svg width="28" height="28" viewBox="0 0 28 28"><circle cx="14" cy="14" r="13.500" fill="#fff"/><path d="M7 21l1-3.500A7.200 7.200 0 1 1 10.800 20z" fill="none" stroke="#35c46b" stroke-width="1.700"/><path d="M11 10.500q1-1 1.800.5l.5 1.500-.8 1q1 1.800 3 2.700l1-1q3 .8 2 2-1.500 2-4 .8-4.500-2-4.500-5.500 0-1 1-2z" fill="#35c46b"/></svg></button>
    <button class="app open badge" aria-label="Chrome"><svg width="27" height="27" viewBox="0 0 27 27"><circle cx="13.500" cy="13.500" r="13" fill="#fbc116"/><path d="M13.500 13.500L2.200 7A13 13 0 0 1 24.800 7z" fill="#e33b2e"/><path d="M13.500 13.500L2.200 7a13 13 0 0 0 9.300 19.400l6-9z" fill="#229a48"/><circle cx="13.500" cy="13.500" r="6.500" fill="#fff"/><circle cx="13.500" cy="13.500" r="5" fill="#357be8"/></svg><span>d</span></button>
    <button class="app open" aria-label="PowerPoint"><svg width="26" height="25" viewBox="0 0 26 25"><circle cx="14" cy="12.500" r="12" fill="#ed6c47"/><path d="M14 .5a12 12 0 0 1 12 12H14z" fill="#ff9577"/><path d="M2 13h24a12 12 0 0 1-24 0z" fill="#d35230"/><rect y="6" width="13" height="13" rx="1" fill="#c13b1b"/><path d="M4.500 16V9H7a2.200 2.200 0 0 1 0 4.500H4.500" fill="none" stroke="#fff" stroke-width="1.700"/></svg></button>
    <button class="app snip" aria-label="Snipping Tool"><svg width="25" height="25" viewBox="0 0 25 25"><path d="M3 3h11v11H3z" fill="#efe9e4"/><path d="M0 1.500h13M1.500 1.500v13" stroke="#cf4a20" stroke-width="3" stroke-dasharray="3 1.400" fill="none"/><path d="M14 4v14M5 13h13" stroke="#8b8f94" stroke-width="2.600"/><circle cx="21.500" cy="12.500" r="2.500" fill="none" stroke="#2797d4" stroke-width="1.700"/><circle cx="12" cy="21.500" r="2.500" fill="none" stroke="#2797d4" stroke-width="1.700"/></svg></button>
  </div>
  <div class="tray">
    <button aria-label="Hidden icons"><svg width="13" height="8" viewBox="0 0 13 8"><path d="M1 7l5.500-5.500L12 7" fill="none" stroke="#222" stroke-width="1.500"/></svg></button>
    <button aria-label="OneDrive"><svg width="19" height="17" viewBox="0 0 19 17"><path d="M4 12a4 4 0 0 1 0-7.500Q7 0 11 2t5 4q3 6-3 6z" fill="#777" stroke="#444"/><circle cx="13" cy="11.500" r="5" fill="#fff"/><path d="M9.700 11a3.300 3.300 0 0 1 6-1.500M16.300 12a3.300 3.300 0 0 1-6 1.500" fill="none" stroke="#2c7cd6" stroke-width="1.300"/></svg></button>
    <button aria-label="Microphone"><svg width="13" height="18" viewBox="0 0 13 18"><rect x="3.700" y=".7" width="5.600" height="11" rx="2.800" fill="none" stroke="#7d3c98" stroke-width="1.400"/><path d="M.7 8.500q0 6 5.800 6t5.800-6M6.500 14.500V18" fill="none" stroke="#7d3c98" stroke-width="1.400"/></svg></button>
    <button class="lang">ENG<br>IN</button>
    <button class="status" aria-label="Network, volume and battery">
      <svg width="18" height="14" viewBox="0 0 18 14" fill="none" stroke="#222" stroke-width="1.400"><path d="M1 5q8-7.500 16 0M3.500 7.700q5.500-5 11 0M6 10.300q3-2.700 6 0"/><circle cx="9" cy="12.300" r=".9" fill="#222"/></svg>
      <svg width="19" height="15" viewBox="0 0 19 15" fill="none" stroke="#222" stroke-width="1.200"><path d="M1 5.500h2.500L8 1.500v12L3.500 9.500H1zM10.500 5q2 2.500 0 5M13 3q3.500 4.500 0 9M15.500 1q5 6.500 0 13"/></svg>
      <svg width="18" height="14" viewBox="0 0 18 14"><rect x="1" y="3.500" width="14" height="9" rx="2" fill="none" stroke="#222" stroke-width="1.400"/><rect x="3" y="5.500" width="10" height="5" fill="#222"/><path d="M16 6h1.500v4H16z" fill="#222"/><path d="M4 0L0 5h3L1.500 9 6 4H3.500z" fill="#222"/></svg>
    </button>
    <button class="clock">19:11<br>18-03-2024</button>
    <button aria-label="Notifications"><svg width="15" height="17" viewBox="0 0 15 17"><path d="M1 13l1.500-3V6.500a5 5 0 0 1 10 0V10l1.500 3zM5.500 14.500q2 2.500 4 0" fill="none" stroke="#222" stroke-width="1.300"/></svg></button>
    <button class="copilot" aria-label="Copilot"><svg width="26" height="24" viewBox="0 0 26 24"><defs><linearGradient id="cp" x2="0" y2="1"><stop offset="0" stop-color="#1878dc"/><stop offset=".5" stop-color="#31a8b8"/><stop offset="1" stop-color="#f0c83b"/></linearGradient><linearGradient id="cq" x2="0" y2="1"><stop offset="0" stop-color="#9b5ee8"/><stop offset="1" stop-color="#f0688a"/></linearGradient></defs><path d="M8 0h9q3 0 3 5l-6 1-3 11q-1 3-4 3H3q-4 0-3-5L4 3q1-3 4-3z" fill="url(#cp)"/><path d="M16 7h6q5 0 4 5l-2 8q-1 4-5 4h-9q3-2 4-6z" fill="url(#cq)"/></svg><span>PRE</span></button>
  </div>
</div>
</body>
</html>
```

FILE: styles.css
```css
* { box-sizing: border-box; }
body {
  margin: 0;
  min-height: 100vh;
  display: flex;
  flex-direction: column;
  background: #0e0e10;
  font-family: Inter, "Liberation Sans", sans-serif;
}
button, input, select { font: inherit; color: inherit; }
button { border: 0; padding: 0; background: none; display: flex; align-items: center; justify-content: center; }
input { border: 0; padding: 0; background: none; min-width: 0; outline: 0; }
a { color: inherit; text-decoration: none; }
svg { display: block; flex: none; }
.defs { width: 0; height: 0; position: absolute; }

/* Browser tabs */
.tabstrip, .toolbar, .taskbar { font-family: "Open Sans", "Noto Sans", sans-serif; }
.tabstrip { height: 44px; background: #dee1e9; display: flex; align-items: flex-end; padding: 0 0 0 7px; color: #474747; font-size: 13px; }
.tab-menu { width: 30px; height: 30px; border-radius: 10px; background: #fff; margin: 0 5px 7px 0; }
.tab { display: flex; align-items: center; gap: 9px; flex: 0 1 260px; min-width: 0; height: 30px; margin-bottom: 7px; padding: 0 15px 0 10px; position: relative; }
.tab:not(.last):not(.active)::after { content: ""; position: absolute; right: 0; top: 7px; width: 2px; height: 17px; background: #c2c5cb; }
.tab-title { flex: 1; white-space: nowrap; overflow: hidden; }
.fade { margin-right: -6px; mask-image: linear-gradient(90deg, #000 88%, transparent); -webkit-mask-image: linear-gradient(90deg, #000 88%, transparent); }
.tab.active { height: 37px; flex-basis: 254px; margin: 0 0 0 3px; padding: 0 11px 7px 8px; background: #fff; border-radius: 10px 10px 0 0; color: #1f1f1f; }
.tab.active::before, .tab.active::after { content: ""; position: absolute; bottom: 0; width: 10px; height: 10px; }
.tab.active::before { left: -10px; background: radial-gradient(circle at 0 0, transparent 10px, #fff 10px); }
.tab.active::after { right: -10px; background: radial-gradient(circle at 100% 0, transparent 10px, #fff 10px); }
.tab-close { width: 14px; height: 14px; color: #1f1f1f; }
.new-tab { width: 28px; height: 30px; margin: 0 auto 7px 8px; }
.win-controls { display: flex; height: 44px; }
.win-controls button { width: 50px; }

.toolbar { height: 51px; background: #fff; display: flex; align-items: center; padding: 0 22px 1px 4px; }
.nav-buttons { display: flex; }
.nav-buttons button { width: 39px; height: 36px; }
.omnibox { flex: 1; height: 37px; border-radius: 19px; background: #eaedf8; display: flex; align-items: center; gap: 16px; padding: 0 16px 0 5px; margin: 0 11px; }
.site-info { width: 26px; height: 26px; border-radius: 50%; background: #fff; }
.url { flex: 1; font-size: 15px; color: #1f1f1f; margin-left: -7px; }
.extensions { width: 116px; height: 37px; border: 1px solid #c7c7c7; border-radius: 19px; display: flex; align-items: center; justify-content: space-between; padding: 0 8px; }
.orbit { border-radius: 50%; box-shadow: 0 1px 4px rgba(0, 0, 0, .35); }
.divider { width: 2px; height: 18px; background: #d3e3fd; margin: 0 20px 0 10px; }
.avatar { width: 22px; height: 22px; border-radius: 50%; background: #689f38; color: #fff; font-size: 13px; margin: 0 27px 0 20px; }

/* Page grid */
.site { flex: 1; display: grid; grid-template-columns: 123px 542fr 135fr 678fr 122px; grid-template-rows: 110px 1fr 107px; background: #0e0e10; color: #fff; }
.cell { border-right: 1px solid #8c8c8e; border-bottom: 1px solid #b4b4b4; display: flex; align-items: center; min-width: 0; position: relative; }
.cell.end { border-right: 0; }
.foot { border-bottom: 0; }
.edge { border-top: 2px solid #b4b4b4; }
.burger-cell { padding-left: 37px; }
.burger { flex-direction: column; gap: 11px; }
.burger span { width: 36px; height: 5px; border-radius: 3px; background: #fff; }
.logo-cell { padding-left: 13px; }
.logo { display: flex; align-items: center; font: 700 26px/44px Roboto, sans-serif; }
.logo > span:nth-of-type(1) { margin-left: 5px; }
.logo-s { margin: 0 2px; }
.tools-cell { justify-content: space-between; padding: 0 69px 0 70px; gap: 24px; font-size: 18px; }
.search { flex: 0 1 326px; min-width: 0; height: 39px; border: 2px solid #fff; border-radius: 20px; display: flex; align-items: center; gap: 4px; padding: 0 9px; }
.search input { flex: 1; width: 0; }
.search input::placeholder { color: #77777a; }
.login { width: 138px; height: 37px; border-radius: 19px; background: #efefef; color: #0e0e10; }

.side { flex-direction: column; align-items: stretch; padding-top: 49px; color: #c4c4c4; }
.profile { height: 107px; padding-left: 25px; }
.side-item { flex: 1; display: flex; align-items: center; justify-content: center; padding-right: 11px; font-size: 14px; line-height: 20px; }
.side-item a { writing-mode: vertical-rl; transform: rotate(180deg); }
.current { position: relative; }
.current::before, .current::after { content: ""; position: absolute; top: 0; bottom: 0; width: 2px; background: linear-gradient(transparent, #fff, transparent); box-shadow: 0 0 5px 1px rgba(160, 60, 150, .3); }
.current::before { left: -9px; }
.current::after { right: -10px; }

.welcome { flex-direction: column; justify-content: center; text-align: center; font-style: italic; color: #c4c4c4; }
.welcome h1 { margin: 0 0 39px; font-size: 46px; line-height: 44px; font-weight: 700; }
.welcome p { margin: 0 0 10px; font-size: 18px; line-height: 26px; }

.scene { position: absolute; inset: 0; width: 100%; height: 100%; }
.scene path { vector-effect: non-scaling-stroke; }
.thin { fill: none; stroke: #b0b0b0; stroke-width: 1px; opacity: .45; }
.thick { fill: none; stroke: #aaa; stroke-width: 3px; }
.thick.soft { stroke-width: 2px; }
.thin path, .thick path, .faint path { fill: none; }
.faint { fill: none; stroke: #8a8a8a; stroke-width: 1px; opacity: .3; }

.form-cell { justify-content: center; padding: 42px 47px 41px 48px; align-items: stretch; }
.card { position: relative; flex: 1 1 0; min-width: 0; border-radius: 18px; background: rgba(196, 196, 196, .4); display: flex; flex-direction: column; gap: 4px; padding: 0 14%; font-size: 16px; }
.card h2 { margin: 0; text-align: center; font-weight: 500; font-size: 36px; line-height: 51px; }
.field { width: 100%; height: 34px; flex: none; border: 1px solid #dadada; border-radius: 4px; background: #c4c4c4; padding: 0 9px; color: #212529; line-height: 24px; }
.field::placeholder, .field input::placeholder { color: #0e0e10; opacity: 1; }
select.field { height: 33px; padding-bottom: 2px; appearance: none; color: #333; background: #c4c4c4 url("data:image/svg+xml,%3Csvg xmlns='http://www.w3.org/2000/svg' viewBox='0 0 12 8'%3E%3Cpath d='M1 1.500l5 5 5-5' fill='none' stroke='%23333' stroke-width='1.500'/%3E%3C/svg%3E") no-repeat right 16px center / 12px 8px; }
.secret { display: flex; align-items: stretch; padding-right: 0; }
.secret input { flex: 1; }
.secret button { width: 34px; border-left: 1px solid #dadada; padding-top: 4px; }
.register { height: 41px; border-radius: 20px; background: #0e0e10; color: #c4c4c4; font-weight: 700; font-size: 18px; }
.card p { margin: 0; text-align: center; white-space: nowrap; }
.card p a { color: #a970ff; }
.card .have { line-height: 34px; color: #c4c4c4; }
.card .terms { font-size: 14px; line-height: 20px; margin-top: 13px; display: flex; justify-content: center; white-space: pre; }
.terms a { font-weight: 600; }

.copyright { padding-left: 13px; font-size: 18px; }
.bars { justify-content: space-between; padding: 0 12px 0 13px; }
.bars i { width: 4px; height: 22px; background: #efefef; }

/* Taskbar */
.taskbar { height: 52px; display: flex; align-items: center; border-top: 1px solid #c3c6ae; background: linear-gradient(90deg, #d9e8c6 0%, #dde8c2 12%, #e9e2b8 28%, #e2e6ba 38%, #dfe9bb 70%, #e6e4b8 80%, #e2e6cd 92%, #dfe9bb 100%); color: #1f1f1f; font-size: 13px; line-height: 17px; }
.weather { width: 309px; padding-left: 20px; gap: 7px; justify-content: flex-start; text-align: left; color: #5a5d52; }
.weather b { font-weight: 400; color: #1f1f1f; }
.apps { display: flex; align-items: center; }
.app { width: 48px; height: 42px; position: relative; }
.start { width: 40px; margin-right: 8px; }
.task-search { width: 240px; height: 34px; margin-right: 3px; border-radius: 17px; background: #f8f8ea; border: 1px solid #d8d6b8; display: flex; align-items: center; gap: 11px; padding: 0 4px 0 11px; font-size: 15px; }
.task-search input { flex: 1; }
.task-search input::placeholder { color: #606060; }
.open::after, .notes::after, .snip::after { content: ""; position: absolute; left: 50%; bottom: 0; width: 7px; height: 3px; margin-left: -3px; border-radius: 2px; background: #7b8063; }
.notes { width: 44px; margin: 0 2px; border-radius: 5px; background: linear-gradient(90deg, #fce4e4 38px, #efdccb 38px 39px, #fce4e4 39px); }
.notes::after { background: #b3261e; }
.snip { width: 42px; margin: 0 3px; border-radius: 5px; background: #f1f3df; box-shadow: 0 0 2px rgba(0, 0, 0, .2); }
.snip::after { width: 18px; margin-left: -9px; background: #9b4fb0; }
.badge span { position: absolute; left: 26px; top: 1px; width: 17px; height: 17px; border-radius: 50%; background: #5f9136; color: #fff; font-size: 12px; line-height: 17px; }
.tray { margin-left: auto; display: flex; align-items: center; gap: 17px; padding-right: 21px; }
.lang { padding: 0 7px; }
.tray .status { gap: 8px; }
.clock { text-align: right; margin-right: -6px; }
.copilot { position: relative; margin-left: 1px; }
.copilot span { position: absolute; left: 6px; bottom: -2px; width: 20px; height: 9px; border-radius: 2px; background: #fcc419; font-size: 8px; font-weight: 700; line-height: 9px; text-align: center; }
```
